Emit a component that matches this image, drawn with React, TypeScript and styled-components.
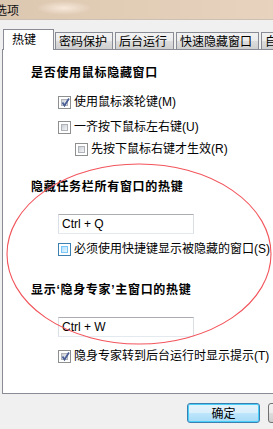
import React from "react";
import styled, { createGlobalStyle, css } from "styled-components";

const Global = createGlobalStyle`
  html, body { margin: 0; padding: 0; background: #f0f0f0; }
  body { width: 273px; height: 429px; overflow: hidden; }
`;

const FONT = `"Liberation Sans", "Noto Sans CJK SC", sans-serif`;

const Viewport = styled.div`
  position: relative;
  width: 273px;
  height: 429px;
  overflow: hidden;
  font-family: ${FONT};
  font-size: 12px;
  color: #000;
`;

const Window = styled.div`
  width: 340px;
  display: flex;
  flex-direction: column;
`;

const TitleBar = styled.div`
  height: 20px;
  display: flex;
  align-items: center;
  background:
    radial-gradient(ellipse 28px 7px at 64px 8px, rgba(250, 236, 222, 0.9), rgba(250, 236, 222, 0) 100%),
    linear-gradient(90deg, #dcc7b1 0%, #e2cdb7 40%, #e9d6c2 100%);
  border-bottom: 1px solid #cdbfb2;
  box-sizing: border-box;
`;

const Title = styled.span`
  margin-left: -5px;
  font-family: "Noto Sans CJK SC", sans-serif;
  font-size: 12px;
  line-height: 14px;
  color: #111;
`;

const TabStrip = styled.div`
  display: flex;
  align-items: flex-end;
  margin-top: 9px;
  padding-left: 3px;
  height: 20px;
  position: relative;
  z-index: 1;
`;

const Tab = styled.div<{ $w: number; $active?: boolean }>`
  box-sizing: border-box;
  width: ${(p) => p.$w}px;
  flex: none;
  font-family: "Noto Sans CJK SC", sans-serif;
  font-size: 12px;
  line-height: 15px;
  border: 1px solid #898c95;
  border-bottom: none;
  margin-left: 2px;
  height: 17px;
  padding-left: 3px;
  white-space: nowrap;
  overflow: hidden;
  background: linear-gradient(#f2f2f2 0%, #ebebeb 50%, #dddddd 51%, #cfcfcf 100%);
  ${(p) =>
    p.$active &&
    css`
      margin-left: 0;
      margin-right: -1px;
      height: 21px;
      margin-bottom: -1px;
      background: #fff;
      padding-left: 8px;
      line-height: 18px;
    `}
`;

const Panel = styled.div`
  margin-left: 2px;
  height: 345px;
  box-sizing: border-box;
  border: 1px solid #898c95;
  background: #fff;
  display: flex;
  flex-direction: column;
  padding-left: 28px;
`;

const Heading = styled.div<{ $mt: number }>`
  margin-top: ${(p) => p.$mt}px;
  font-family: ${FONT};
  font-weight: bold;
  font-size: 12px;
  letter-spacing: 0.7px;
  line-height: 16px;
  height: 16px;
`;

const Row = styled.label<{ $mt: number; $indent?: number }>`
  display: flex;
  align-items: center;
  gap: 3px;
  height: 16px;
  margin-top: ${(p) => p.$mt}px;
  margin-left: ${(p) => 27 + (p.$indent || 0)}px;
  white-space: nowrap;
  line-height: 16px;
`;

const Box = styled.span<{ $hover?: boolean }>`
  position: relative;
  box-sizing: border-box;
  width: 13px;
  height: 13px;
  flex: none;
  border: 1px solid ${(p) => (p.$hover ? "#3c7fb1" : "#8e8f8f")};
  background: #fff;
  padding: 2px;
  display: flex;
`;

const BoxInner = styled.span<{ $hover?: boolean }>`
  flex: 1;
  border: 1px solid ${(p) => (p.$hover ? "#79c6f9" : "#aeb3b9")};
  background: ${(p) =>
    p.$hover
      ? "linear-gradient(135deg, #b1dffd 0%, #e9f7fe 100%)"
      : "linear-gradient(135deg, #cbcfd5 0%, #f6f6f6 100%)"};
`;

const Check = styled.svg`
  position: absolute;
  left: 1px;
  top: 0px;
`;

const Input = styled.div<{ $mt: number }>`
  box-sizing: border-box;
  margin-top: ${(p) => p.$mt}px;
  margin-left: 27px;
  width: 136px;
  height: 20px;
  border: 1px solid #dbdfe6;
  border-top-color: #abadb3;
  border-bottom-color: #e3e9ef;
  padding-left: 3px;
  font-family: "Liberation Sans", sans-serif;
  font-size: 12px;
  line-height: 18px;
`;

const Buttons = styled.div`
  display: flex;
  gap: 8px;
  margin-top: 9px;
  padding-left: 187px;
`;

const Button = styled.div<{ $default?: boolean }>`
  box-sizing: border-box;
  width: 73px;
  height: 20px;
  flex: none;
  border-radius: 3px;
  text-align: center;
  font-family: "Noto Sans CJK SC", sans-serif;
  font-size: 12px;
  line-height: 17px;
  border: 1px solid #707070;
  background: linear-gradient(#f2f2f2 0%, #ebebeb 50%, #dddddd 51%, #cfcfcf 100%);
  ${(p) =>
    p.$default &&
    css`
      border-color: #3c7fb1;
      box-shadow: inset 0 0 0 1px #48d0f8;
      background: linear-gradient(#e5f4fc 0%, #d9effb 50%, #bee6fd 51%, #a7d9f5 100%);
    `}
`;

const Overlay = styled.svg`
  position: absolute;
  left: 0;
  top: 0;
  pointer-events: none;
`;

function CheckBox({ checked, hover }: { checked?: boolean; hover?: boolean }) {
  return (
    <Box $hover={hover}>
      <BoxInner $hover={hover} />
      {checked && (
        <Check width="11" height="11" viewBox="0 0 11 11">
          <path d="M2.5 5.5 L4.5 8.5 L9 1.5" fill="none" stroke="#4a5f97" strokeWidth="1.8" />
        </Check>
      )}
    </Box>
  );
}

export default function App() {
  return (
    <Viewport>
      <Global />
      <Window>
        <TitleBar>
          <Title>选项</Title>
        </TitleBar>
        <TabStrip>
          <Tab $w={51} $active>热键</Tab>
          <Tab $w={58}>密码保护</Tab>
          <Tab $w={59}>后台运行</Tab>
          <Tab $w={83}>快速隐藏窗口</Tab>
          <Tab $w={60}>自启动</Tab>
        </TabStrip>
        <Panel>
          <Heading $mt={15}>是否使用鼠标隐藏窗口</Heading>
          <Row $mt={13}>
            <CheckBox checked />
            使用鼠标滚轮键(M)
          </Row>
          <Row $mt={9}>
            <CheckBox />
            一齐按下鼠标左右键(U)
          </Row>
          <Row $mt={6} $indent={17}>
            <CheckBox />
            先按下鼠标右键才生效(R)
          </Row>
          <Heading $mt={22}>隐藏任务栏所有窗口的热键</Heading>
          <Input $mt={19}>Ctrl + Q</Input>
          <Row $mt={7}>
            <CheckBox hover />
            必须使用快捷键显示被隐藏的窗口(S)
          </Row>
          <Heading $mt={25}>显示‘隐身专家’主窗口的热键</Heading>
          <Input $mt={19}>Ctrl + W</Input>
          <Row $mt={11}>
            <CheckBox checked />
            隐身专家转到后台运行时显示提示(T)
          </Row>
        </Panel>
        <Buttons>
          <Button $default>确定</Button>
          <Button>取消</Button>
        </Buttons>
      </Window>
      <Overlay width="273" height="429" viewBox="0 0 273 429">
        <ellipse cx="139" cy="254" rx="132" ry="90" fill="none" stroke="#f2545b" strokeWidth="1.1" />
      </Overlay>
    </Viewport>
  );
}
